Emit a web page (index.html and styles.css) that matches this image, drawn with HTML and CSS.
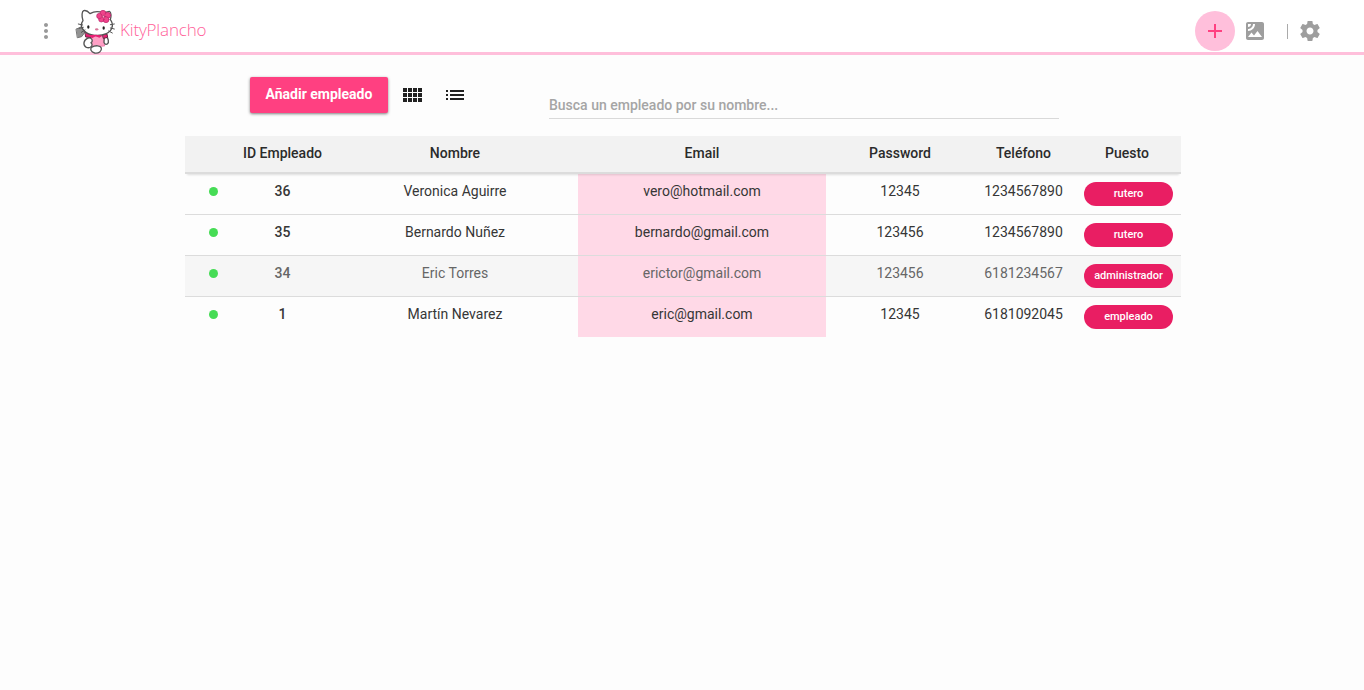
FILE: index.html
```html
<!DOCTYPE html>
<html lang="es">
<head>
<meta charset="utf-8">
<title>KityPlancho</title>
<link rel="stylesheet" href="styles.css">
</head>
<body>
<header class="topbar">
  <svg class="more" viewBox="0 0 24 24"><path d="M12 8c1.1 0 2-.9 2-2s-.9-2-2-2-2 .9-2 2 .9 2 2 2zm0 2c-1.1 0-2 .9-2 2s.9 2 2 2 2-.9 2-2-.9-2-2-2zm0 6c-1.1 0-2 .9-2 2s.9 2 2 2 2-.9 2-2-.9-2-2-2z"/></svg>
  <svg class="logo" viewBox="0 0 150 156" stroke-linejoin="round" stroke-linecap="round">
    <path d="M19 75 43 65 46 83 35 98 23 101Z" fill="#929292" stroke="#777" stroke-width="3"/>
    <path d="M46 84 68 84 65 101 48 99Z" fill="#e91e73" stroke="#6b2040" stroke-width="3"/>
    <path d="M66 92 98 92 104 126 64 129Z" fill="#ff9fc5" stroke="#e8609a" stroke-width="2"/>
    <path d="M52 103C65 98 71 111 63 116 72 125 60 134 49 130 38 124 40 109 52 103Z" fill="#fff" stroke="#555" stroke-width="4"/>
    <path d="M64 130C77 123 91 124 94 132 96 142 86 149 74 147 63 144 60 136 64 130Z" fill="#fff" stroke="#555" stroke-width="4"/>
    <path d="M103 98C112 96 116 106 115 116 111 124 104 122 102 115Z" fill="#fff" stroke="#555" stroke-width="4"/>
    <path d="M98 90 111 90 113 100 101 103Z" fill="#e91e73" stroke="#6b2040" stroke-width="3"/>
    <path d="M39 50C34 35 36 22 41 20 47 18 54 22 60 29 72 22 88 22 99 27L118 22C124 24 124 37 121 47 133 62 126 82 109 89 87 99 57 95 43 81 33 71 32 59 39 50Z" fill="#fff" stroke="#555" stroke-width="4"/>
    <path d="M25 60 38 63M27 73 40 70M34 85 45 78M121 62 133 60M121 72 133 75M116 81 127 87" fill="none" stroke="#555" stroke-width="3"/>
    <g fill="#f0438b" stroke="#b8246a" stroke-width="2"><circle cx="99" cy="28" r="9"/><circle cx="113" cy="34" r="9"/><circle cx="108" cy="47" r="9"/><circle cx="94" cy="46" r="8"/><circle cx="88" cy="36" r="8"/></g>
    <circle cx="101" cy="38" r="7" fill="#f0438b"/><circle cx="101" cy="38" r="4" fill="#ff9cc4" stroke="#a31c57" stroke-width="2"/>
    <ellipse cx="55" cy="69" rx="3.500" ry="5" fill="#222"/><ellipse cx="101" cy="72" rx="3.500" ry="5" fill="#222"/><ellipse cx="80" cy="76" rx="5" ry="3.500" fill="#d77699"/>
    <path d="M60 93 78 92 98 95 88 101 77 97 66 103Z" fill="#e91e73"/>
  </svg>
  <span class="brand">KityPlancho</span>
  <div class="actions">
    <span class="add"><svg viewBox="0 0 24 24"><path d="M19 13h-6v6h-2v-6H5v-2h6V5h2v6h6v2z"/></svg></span>
    <svg class="photo" viewBox="0 0 24 24"><path fill-rule="evenodd" d="M19 3H5c-1.100 0-2 .9-2 2v14c0 1.100.9 2 2 2h14c1.100 0 2-.9 2-2V5c0-1.100-.9-2-2-2zM5 4.990h3C8 6.650 6.660 8 5 8V4.990zM5 12v-2c2.760 0 5-2.250 5-5.010h2C12 8.860 8.870 12 5 12zm0 6l3.500-4.500 2.500 3.010L14.500 12l4.500 6H5z"/></svg>
    <span class="divider"></span>
    <svg class="gear" viewBox="0 0 24 24"><path d="M19.430 12.980c.04-.32.070-.64.070-.98s-.03-.66-.07-.98l2.110-1.650c.19-.15.240-.42.120-.64l-2-3.460c-.12-.22-.39-.3-.61-.22l-2.490 1c-.52-.4-1.080-.73-1.690-.98l-.38-2.650C14.460 2.180 14.250 2 14 2h-4c-.25 0-.46.180-.49.420l-.38 2.650c-.61.250-1.170.590-1.690.98l-2.490-1c-.23-.09-.49 0-.61.220l-2 3.460c-.13.220-.07.490.12.640l2.110 1.650c-.04.320-.07.650-.07.980s.03.660.07.980l-2.110 1.650c-.19.150-.24.420-.12.640l2 3.460c.12.220.39.300.61.220l2.490-1c.52.400 1.080.730 1.690.980l.38 2.650c.03.240.24.420.49.420h4c.25 0 .46-.18.490-.42l.38-2.650c.61-.25 1.170-.59 1.690-.98l2.490 1c.23.090.49 0 .61-.22l2-3.460c.12-.22.070-.49-.12-.64l-2.110-1.650zM12 15.500c-1.930 0-3.500-1.570-3.500-3.500s1.570-3.500 3.500-3.500 3.500 1.570 3.500 3.500-1.570 3.500-3.500 3.500z"/></svg>
  </div>
</header>
<main class="content">
  <div class="toolbar">
    <button class="primary">Añadir empleado</button>
    <svg class="view" viewBox="0 0 24 24"><path d="M2 5h4v4H2zM7 5h4v4H7zM12 5h4v4h-4zM17 5h4v4h-4zM2 10h4v4H2zM7 10h4v4H7zM12 10h4v4h-4zM17 10h4v4h-4zM2 15h4v4H2zM7 15h4v4H7zM12 15h4v4h-4zM17 15h4v4h-4z"/></svg>
    <svg class="view list" viewBox="0 0 24 24"><path d="M3 13h2v-2H3v2zm0 4h2v-2H3v2zm0-8h2V7H3v2zm4 4h14v-2H7v2zm0 4h14v-2H7v2zM7 7v2h14V7H7z"/></svg>
    <input class="search" type="text" placeholder="Busca un empleado por su nombre...">
  </div>
  <div class="table">
    <div class="row head"><span></span><span>ID Empleado</span><span>Nombre</span><span>Email</span><span>Password</span><span>Teléfono</span><span>Puesto</span></div>
    <div class="row"><i class="dot"></i><b>36</b><span>Veronica Aguirre</span><span class="email">vero@hotmail.com</span><span>12345</span><span>1234567890</span><span class="role"><em>rutero</em></span></div>
    <div class="row"><i class="dot"></i><b>35</b><span>Bernardo Nuñez</span><span class="email">bernardo@gmail.com</span><span>123456</span><span>1234567890</span><span class="role"><em>rutero</em></span></div>
    <div class="row hovered"><i class="dot"></i><b>34</b><span>Eric Torres</span><span class="email">erictor@gmail.com</span><span>123456</span><span>6181234567</span><span class="role"><em>administrador</em></span></div>
    <div class="row"><i class="dot"></i><b>1</b><span>Martín Nevarez</span><span class="email">eric@gmail.com</span><span>12345</span><span>6181092045</span><span class="role"><em>empleado</em></span></div>
  </div>
</main>
</body>
</html>
```
FILE: styles.css
```css
* { box-sizing: border-box; }
body { margin: 0; height: 690px; overflow: hidden; background: #fdfdfd; color: #363636; font: 14px/20px Roboto, sans-serif; }
.topbar { display: flex; align-items: flex-start; height: 55px; background: #fff; border-bottom: 3px solid #ffbfdb; }
.more { width: 24px; height: 24px; margin: 19px 0 0 34px; fill: #999; }
.logo { width: 50px; height: 52px; margin: 4px 0 0 12px; }
.brand { padding-top: 18px; color: #ff5f9a; font: 300 17px/24px "Open Sans", sans-serif; letter-spacing: -.16px; }
.actions { display: flex; align-items: center; margin: 11px 42px 0 auto; fill: #9e9e9e; }
.add { display: flex; align-items: center; justify-content: center; width: 40px; height: 40px; border-radius: 50%; background: #ffbfdb; fill: #ff4081; }
.add svg { width: 24px; height: 24px; }
.photo { width: 24px; height: 24px; margin-left: 8.4px; }
.divider { width: 1px; height: 15px; margin: 0 10px 0 19.6px; background: #aaa; }
.gear { width: 24px; height: 24px; }
.content { width: 996px; margin-left: 185px; }
.toolbar { display: flex; align-items: flex-start; height: 81px; padding: 22px 0 0 65px; }
.primary { width: 138px; height: 36px; padding: 0 0 2px; border: 0; border-radius: 2px; background: #ff4081; box-shadow: 0 1px 3px rgba(0,0,0,.5); color: #fff; font: 700 14px/20px Roboto, sans-serif; }
.view { width: 24px; height: 24px; margin: 6px 0 0 12.6px; fill: #212121; }
.list { margin-left: 18.4px; }
.search { width: 510px; height: 29px; margin: 13px 0 0 82px; padding: 2px 0 0; border: 0; border-bottom: 1px solid #d9d9d9; background: none; font: 500 14px/20px Roboto, sans-serif; }
.search::placeholder { color: #a5a5a5; opacity: 1; }
.row { display: grid; grid-template-columns: 48px 99px 246px 248px 148px 99px 108px; height: 41px; border-bottom: 1px solid #dcdcdc; text-align: center; line-height: 34px; }
.row:last-child { height: 40px; border-bottom: 0; }
.row b { font-weight: 500; }
.head { position: relative; height: 38px; background: #f2f2f2; border-bottom: 2px solid #dcdcdc; box-shadow: 0 3px 2px -2px rgba(0,0,0,.12); color: #2b2b2b; font-weight: 500; line-height: 35px; }
.hovered { background-color: #f6f6f6; color: #666; }
.email { background: #ffd9e7; }
.dot { width: 9px; height: 9px; margin: 13px 0 0 24px; border-radius: 50%; background: #46dc55; }
.role { padding: 8px 0 0 11px; }
.role em { display: block; width: 89px; height: 24px; border-radius: 12px; background: #e91e63; color: #fff; font: 500 11px/23px Roboto, sans-serif; }
```
